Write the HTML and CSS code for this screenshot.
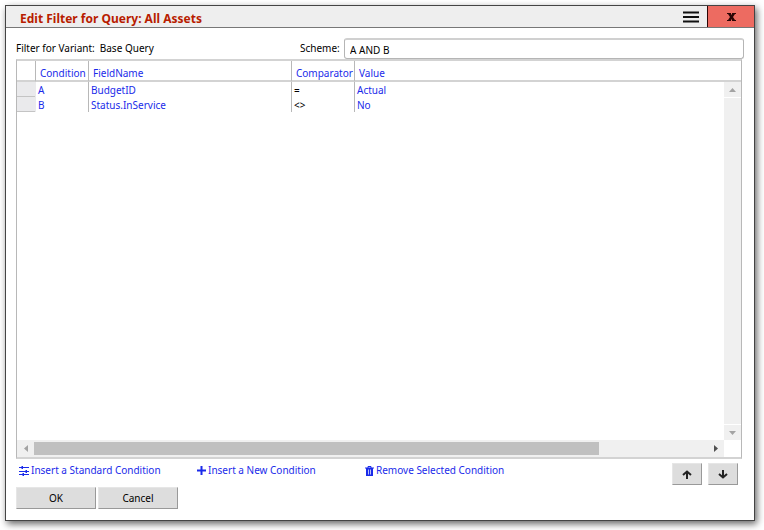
FILE: index.html
```html
<!DOCTYPE html>
<html lang="en">
<head>
    <meta charset="UTF-8">
    <meta name="viewport" content="width=device-width, initial-scale=1.0">
    <title>Edit Filter for Query: All Assets</title>
    <link rel="stylesheet" href="styles.css">
</head>
<body>

    <main class="dialog">
        <header class="titlebar">
            <h1>Edit Filter for Query: All Assets</h1>
            <button type="button" class="menu" aria-label="Menu">
                <svg width="16" height="12" viewBox="0 0 16 12"><path d="M0 1.500h16M0 6h16M0 10.500h16" stroke="#111" stroke-width="2"/></svg>
            </button>
            <button type="button" class="close" aria-label="Close">
                <svg width="9" height="8" viewBox="0 0 9 8"><path d="M0 0h4v1l.5 1L5 1V0h4v1H8L6 4l2 3h1v1H5V7l-.5-1L4 7v1H0V7h1l2-3-2-3H0z" fill="#2a0505"/></svg>
            </button>
        </header>

        <form class="content">
            <div class="fields">
                <div class="variant"><span>Filter for Variant:</span> <span>Base Query</span></div>
                <label for="scheme">Scheme:</label>
                <input type="text" id="scheme" value="A AND B">
            </div>

            <div class="grid">
                <table>
                    <thead>
                        <tr>
                            <th class="col-mark"></th>
                            <th class="col-condition">Condition</th>
                            <th class="col-field">FieldName</th>
                            <th class="col-comparator">Comparator</th>
                            <th>Value</th>
                        </tr>
                    </thead>
                    <tbody>
                        <tr>
                            <td class="mark"></td>
                            <td>A</td>
                            <td>BudgetID</td>
                            <td class="operator">=</td>
                            <td>Actual</td>
                        </tr>
                        <tr>
                            <td class="mark"></td>
                            <td>B</td>
                            <td>Status.InService</td>
                            <td class="operator">&lt;&gt;</td>
                            <td>No</td>
                        </tr>
                    </tbody>
                </table>
                <div class="vscroll">
                    <span class="step"><svg width="7" height="4" viewBox="0 0 7 4"><path d="M0 4L3.500 0 7 4z" fill="#a3a3a3"/></svg></span>
                    <span class="step"><svg width="7" height="4" viewBox="0 0 7 4"><path d="M0 0h7L3.500 4z" fill="#a3a3a3"/></svg></span>
                </div>
                <div class="hscroll">
                    <span class="step"><svg width="4" height="7" viewBox="0 0 4 7"><path d="M4 0v7L0 3.500z" fill="#a3a3a3"/></svg></span>
                    <div class="track"><div class="thumb"></div></div>
                    <span class="step"><svg width="4" height="7" viewBox="0 0 4 7"><path d="M0 0l4 3.500L0 7z" fill="#505050"/></svg></span>
                </div>
            </div>

            <div class="actions">
                <div class="links">
                    <a href="#">
                        <svg width="10" height="10" viewBox="0 0 10 10"><path d="M0 1.500h10M0 5.500h10M0 8.500h10" stroke="currentColor" fill="none"/><path d="M2.500 0H4v3H2.500zM6.500 4H8v3H6.500zM3.500 7H5v3H3.500z" fill="currentColor"/></svg>
                        Insert a Standard Condition
                    </a>
                    <a href="#">
                        <svg width="9" height="9" viewBox="0 0 9 9"><path d="M3.500 0h2v3.500H9v2H5.500V9h-2V5.500H0v-2h3.500z" fill="currentColor"/></svg>
                        Insert a New Condition
                    </a>
                    <a href="#">
                        <svg width="9" height="10" viewBox="0 0 9 10"><path d="M0 2h9M3 2V.5h3V2" stroke="currentColor" fill="none"/><path d="M1 2h7v8H1z" fill="currentColor"/><path d="M3.500 3.500v5M5.500 3.500v5" stroke="#fff" stroke-width=".7"/></svg>
                        Remove Selected Condition
                    </a>
                </div>
                <button type="button" class="arrow" aria-label="Move up">
                    <svg width="10" height="9" viewBox="0 0 10 9"><path d="M5 9V1.500M1 5l4-3.500L9 5" stroke="#222" stroke-width="2" fill="none"/></svg>
                </button>
                <button type="button" class="arrow" aria-label="Move down">
                    <svg width="10" height="9" viewBox="0 0 10 9"><path d="M5 0v7.500M1 4l4 3.500L9 4" stroke="#222" stroke-width="2" fill="none"/></svg>
                </button>
            </div>

            <div class="buttons">
                <button type="button">OK</button>
                <button type="button">Cancel</button>
            </div>
        </form>
    </main>

</body>
</html>
```
FILE: styles.css
```css
* {
    box-sizing: border-box;
}
body {
    margin: 0;
    padding: 5px 9px 9px 5px;
    min-height: 100vh;
    display: flex;
    background: #fff;
    color: #000;
    font: 10px/15px "Noto Sans", sans-serif;
}
button, input {
    font: inherit;
    color: inherit;
}
svg {
    display: block;
    flex: none;
}
.dialog {
    flex: 1;
    display: flex;
    flex-direction: column;
    background: #fff;
    border: 1px solid #444;
    box-shadow: 2px 3px 7px rgba(0, 0, 0, 0.6);
}

/* title bar */
.titlebar {
    display: flex;
    height: 22px;
    background: #eee;
    border-bottom: 1px solid #777;
}
.titlebar h1 {
    flex: 1;
    margin: 0;
    padding-left: 14px;
    color: #b81c00;
    font-size: 12px;
    line-height: 25px;
}
.titlebar button {
    display: flex;
    align-items: center;
    justify-content: center;
    padding: 0;
    border: 0;
}
.menu {
    width: 32px;
    background: none;
}
.close {
    width: 47px;
    background: #ed6b61;
}
.titlebar .close {
    border-left: 1px solid #2a0505;
}

.content {
    flex: 1;
    display: flex;
    flex-direction: column;
    padding: 10px 12px 11px 10px;
}

/* variant and scheme */
.fields {
    display: flex;
    align-items: center;
}
.variant {
    display: flex;
    gap: 5px;
    width: 284px;
}
.fields label {
    width: 40px;
}
.fields input {
    flex: 1;
    height: 21px;
    margin: 0 -2px 0 4px;
    padding: 1px 5px 0;
    border: 1px solid #b5b5b5;
    border-top: 2px solid #d0d0d0;
    border-radius: 3px;
}

/* condition list */
.grid {
    flex: 1;
    display: grid;
    grid-template-columns: 1fr 17px;
    grid-template-rows: 21px 1fr 17px;
    border: 1px solid #b8b8b8;
    border-top: 2px solid #d3d3d3;
    border-bottom: 2px solid #d3d3d3;
}
table {
    grid-area: 1 / 1 / 3 / 3;
    align-self: start;
    width: 100%;
    table-layout: fixed;
    border-collapse: separate;
    border-spacing: 0;
    color: #1a2bea;
    text-align: left;
}
th, td {
    border-left: 1px solid #b8b8b8;
    white-space: nowrap;
}
th {
    height: 21px;
    padding: 6px 0 0 4px;
    border-bottom: 2px solid #d3d3d3;
    font-weight: normal;
    line-height: 13px;
}
td {
    height: 15px;
    padding: 2px 0 0 2px;
    line-height: 13px;
}
th:first-child, td:first-child {
    border-left: 0;
}
td:nth-child(2) {
    border-left-color: #eaeaec;
}
.col-mark {
    width: 18px;
}
.col-condition {
    width: 53px;
}
.col-field {
    width: 203px;
}
.col-comparator {
    width: 63px;
}
.mark {
    background: #eaeaec;
    border-bottom: 1px solid #c4c4c4;
}
.operator {
    color: #000;
}

/* scrollbars */
.step {
    display: flex;
    align-items: center;
    justify-content: center;
    width: 17px;
    height: 16px;
}
.vscroll {
    grid-area: 2 / 2;
    display: flex;
    flex-direction: column;
    justify-content: space-between;
    background: #f0f0f0;
}
.vscroll .step:first-child {
    border-bottom: 1px solid #fff;
}
.vscroll .step:last-child {
    border-top: 1px solid #fff;
}
.hscroll {
    grid-area: 3 / 1;
    display: flex;
    align-items: center;
    background: #f0f0f0;
}
.track {
    flex: 1;
}
.thumb {
    width: 84%;
    height: 13px;
    background: #c0c0c0;
}

/* links and buttons */
.actions {
    display: flex;
    gap: 6px;
    margin: 4px 4px 0 0;
}
.links {
    flex: 1;
    display: grid;
    grid-template-columns: 178px 168px auto;
    padding-left: 3px;
}
.links a {
    display: flex;
    align-items: center;
    gap: 2px;
    height: 15px;
    color: #1a2bea;
    text-decoration: none;
}
.actions button, .buttons button {
    display: flex;
    align-items: center;
    justify-content: center;
    height: 22px;
    padding: 0;
    background: #ddd;
    border: 1px solid #e6e6e6;
    border-right-color: #999;
    border-bottom-color: #999;
}
.arrow {
    width: 30px;
}
.buttons {
    display: flex;
    gap: 2px;
    margin-top: 2px;
}
.buttons button {
    width: 80px;
}
```
